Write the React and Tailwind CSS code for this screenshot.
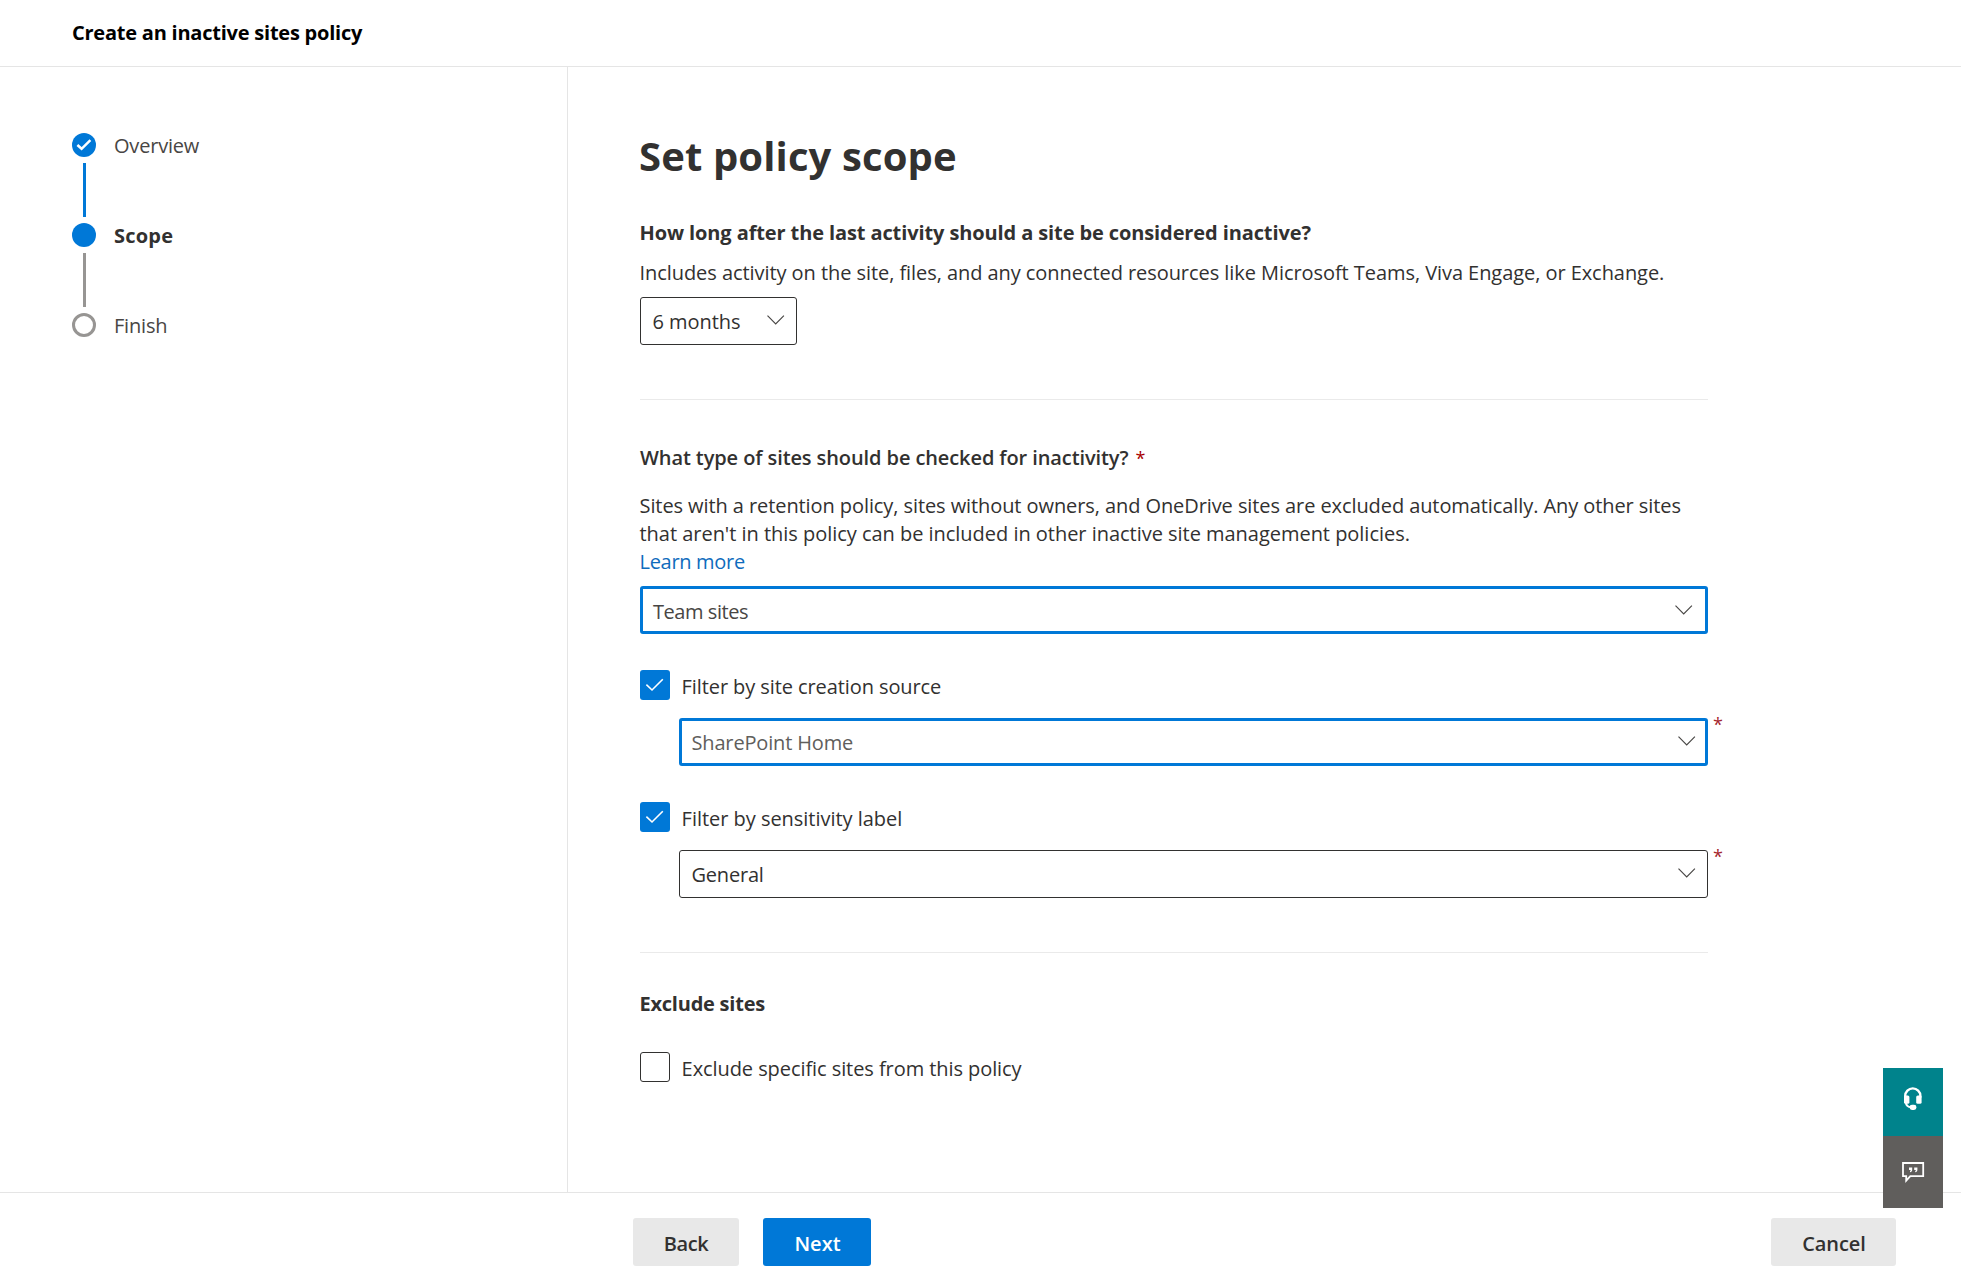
import React from 'react';

function Chevron() {
  return (
    <svg className="h-[10px] w-[18px]" viewBox="0 0 18 10" fill="none" stroke="#484644" strokeWidth="1.15">
      <path d="M0.5 0.6 8.7 9 16.9 0.6" />
    </svg>
  );
}

function Dropdown({ className, chevron, children }) {
  return (
    <div className={`flex h-12 items-start justify-between rounded-[3px] bg-white ${className}`}>
      <span>{children}</span>
      <span className={chevron}>
        <Chevron />
      </span>
    </div>
  );
}

function Checkbox({ checked, className, children }) {
  return (
    <label className={`flex h-[30px] items-start gap-[11.6px] ${className}`}>
      {checked ? (
        <span className="flex h-[30px] w-[30px] items-center justify-center rounded-[3px] bg-[#0078d7]">
          <svg className="h-[30px] w-[30px]" viewBox="0 0 30 30" fill="none" stroke="#fff" strokeWidth="1.6">
            <path d="M6.4 14.7 12 20 22.8 9.2" />
          </svg>
        </span>
      ) : (
        <span className="h-[30px] w-[30px] rounded-[3px] border border-[#323130]" />
      )}
      <span className="pt-[3px]">{children}</span>
    </label>
  );
}

function StepCircle({ state }) {
  if (state === 'done')
    return (
      <span className="flex h-6 w-6 rounded-full bg-[#0078d7]">
        <svg className="h-6 w-6" viewBox="0 0 24 24" fill="none" stroke="#fff" strokeWidth="2.5">
          <path d="M5.4 12 9.6 15.8 18.4 7.2" />
        </svg>
      </span>
    );
  if (state === 'current') return <span className="h-6 w-6 rounded-full bg-[#0078d7]" />;
  return <span className="h-6 w-6 rounded-full border-[3px] border-[#979593]" />;
}

function Step({ state, line, className, children }) {
  return (
    <li className="flex h-[90px] items-start gap-[18px]">
      <span className="flex w-6 flex-col items-center gap-[6px]">
        <StepCircle state={state} />
        {line && <span className={`h-[54px] w-[3px] ${line}`} />}
      </span>
      <span className={`-mt-px ${className}`}>{children}</span>
    </li>
  );
}

export default function App() {
  return (
    <div className="relative flex h-[1283px] w-[1961px] flex-col overflow-hidden bg-white font-['Open_Sans','Noto_Sans',sans-serif] text-[20px] leading-[27px] whitespace-nowrap text-[#323130]">
      <header className="h-[67px] shrink-0 border-b border-[#e5e5e5] pt-[19px] pl-[72px] font-bold tracking-[-0.228px] text-black">
        Create an inactive sites policy
      </header>

      <div className="flex h-[1125px] shrink-0">
        <nav className="w-[568px] shrink-0 border-r border-[#e5e5e5] pt-[66px] pl-[72px]">
          <ol>
            <Step state="done" line="bg-[#0078d7]" className="tracking-[-0.2px] text-[#484644]">
              Overview
            </Step>
            <Step state="current" line="bg-[#979593]" className="font-bold tracking-[0.2px]">
              Scope
            </Step>
            <Step state="todo" className="tracking-[-0.2px] text-[#484644]">
              Finish
            </Step>
          </ol>
        </nav>

        <main className="w-[1140px] shrink-0 pt-[61px] pl-[72px]">
          <h1 className="-ml-px text-[40px] leading-[55px] font-bold tracking-[0.123px]">Set policy scope</h1>

          <section className="pt-9">
            <h2 className="-ml-[0.5px] font-bold tracking-[-0.108px]">
              How long after the last activity should a site be considered inactive?
            </h2>
            <p className="mt-[13px] -ml-[0.5px] tracking-[-0.062px]">
              Includes activity on the site, files, and any connected resources like Microsoft Teams, Viva Engage, or
              Exchange.
            </p>
            <Dropdown
              className="mt-[11px] w-[157px] border border-[#323130] pt-[10px] pr-[11px] pl-[11.5px] tracking-[-0.05px]"
              chevron="pt-[7px]"
            >
              6 months
            </Dropdown>
          </section>

          <hr className="mt-[54px] border-[#eaeaea]" />

          <section className="pt-11">
            <h2 className="font-semibold tracking-[-0.095px]">
              What type of sites should be checked for inactivity?
              <span className="pl-[7px] text-[18px] leading-none font-normal text-[#a80000]">*</span>
            </h2>
            <div className="mt-[21px] -ml-[0.5px] flex flex-col gap-px">
              <p className="tracking-[-0.084px]">
                Sites with a retention policy, sites without owners, and OneDrive sites are excluded automatically. Any
                other sites
              </p>
              <p className="tracking-[-0.028px]">
                that aren't in this policy can be included in other inactive site management policies.
              </p>
              <a className="tracking-[-0.3px] text-[#0f6cbd]">Learn more</a>
            </div>
            <Dropdown
              className="mt-[11px] border-[3px] border-[#0078d7] pt-[9px] pr-[12px] pl-[10px] tracking-[-0.45px] text-[#484644]"
              chevron="pt-[7px]"
            >
              Team sites
            </Dropdown>

            <Checkbox checked className="mt-9 tracking-[-0.09px]">
              Filter by site creation source
            </Checkbox>
            <div className="relative mt-[18px] ml-[39px]">
              <Dropdown
                className="border-[3px] border-[#0078d7] pt-[8px] pr-[9px] pl-[9.5px] tracking-[-0.16px] text-[#605e5c]"
                chevron="pt-[7px]"
              >
                SharePoint Home
              </Dropdown>
              <span className="absolute top-[-7px] left-full pl-[5px] text-[18px] text-[#a4262c]">*</span>
            </div>

            <Checkbox checked className="mt-9 tracking-[-0.03px]">
              Filter by sensitivity label
            </Checkbox>
            <div className="relative mt-[18px] ml-[39px]">
              <Dropdown className="border border-[#323130] pt-[10px] pr-[11px] pl-[11.5px] tracking-[-0.2px]" chevron="pt-[7px]">
                General
              </Dropdown>
              <span className="absolute top-[-7px] left-full pl-[5px] text-[18px] text-[#a4262c]">*</span>
            </div>
          </section>

          <hr className="mt-[54px] border-[#eaeaea]" />

          <section className="pt-[37px]">
            <h2 className="-ml-[0.5px] font-bold tracking-[-0.23px]">Exclude sites</h2>
            <Checkbox className="mt-[35px] tracking-[-0.072px]">Exclude specific sites from this policy</Checkbox>
          </section>
        </main>
      </div>

      <footer className="flex h-[91px] shrink-0 items-start border-t border-[#e5e5e5] pt-[25px] pr-[65px] pl-[633px] font-semibold">
        <button className="flex h-12 w-[106px] justify-center rounded-[3px] bg-[#e8e8e8] pt-3 tracking-[-0.4px]">
          Back
        </button>
        <button className="ml-6 flex h-12 w-[108px] justify-center rounded-[3px] bg-[#0078d7] pt-3 pl-px text-white">
          Next
        </button>
        <button className="ml-auto flex h-12 w-[125px] justify-center rounded-[3px] bg-[#e8e8e8] pt-3 pl-px tracking-[-0.1px]">
          Cancel
        </button>
      </footer>

      <div className="absolute top-[1068px] left-[1883px] w-[60px]">
        <div className="flex h-[68px] justify-center bg-[#00838c] pt-[17px]">
          <svg className="h-[26px] w-[24px]" viewBox="0 0 24 26" fill="none" stroke="#fff">
            <path d="M4.2 12.5V11a7.6 7.6 0 0 1 15.2 0v1.5" strokeWidth="2.4" />
            <rect x="3" y="10.4" width="5.4" height="8.4" rx="1.6" fill="#fff" stroke="none" />
            <rect x="15.2" y="10.4" width="5.4" height="8.4" rx="1.6" fill="#fff" stroke="none" />
            <path d="M4.8 17c.2 3.2 2 5.2 5.6 5.2" strokeWidth="2" />
            <rect x="8.6" y="19.7" width="6.8" height="5.2" rx="2.4" fill="#fff" stroke="none" />
          </svg>
        </div>
        <div className="flex h-[72px] justify-center bg-[#605e5c] pt-[24px]">
          <svg className="h-[24px] w-[24px]" viewBox="0 0 24 24" fill="none" stroke="#fff">
            <path d="M2 3h20.2v13.2H9.3L5.2 20.6V16.2H2z" strokeWidth="1.8" />
            <path
              d="M8 7.6h3.2v2.1c0 1.4-.8 2.2-2.2 2.5v-1.1c.5-.2.8-.5.8-1H8zM13.2 7.6h3.2v2.1c0 1.4-.8 2.2-2.2 2.5v-1.1c.5-.2.8-.5.8-1h-1.8z"
              fill="#fff"
              stroke="none"
            />
          </svg>
        </div>
      </div>
    </div>
  );
}
